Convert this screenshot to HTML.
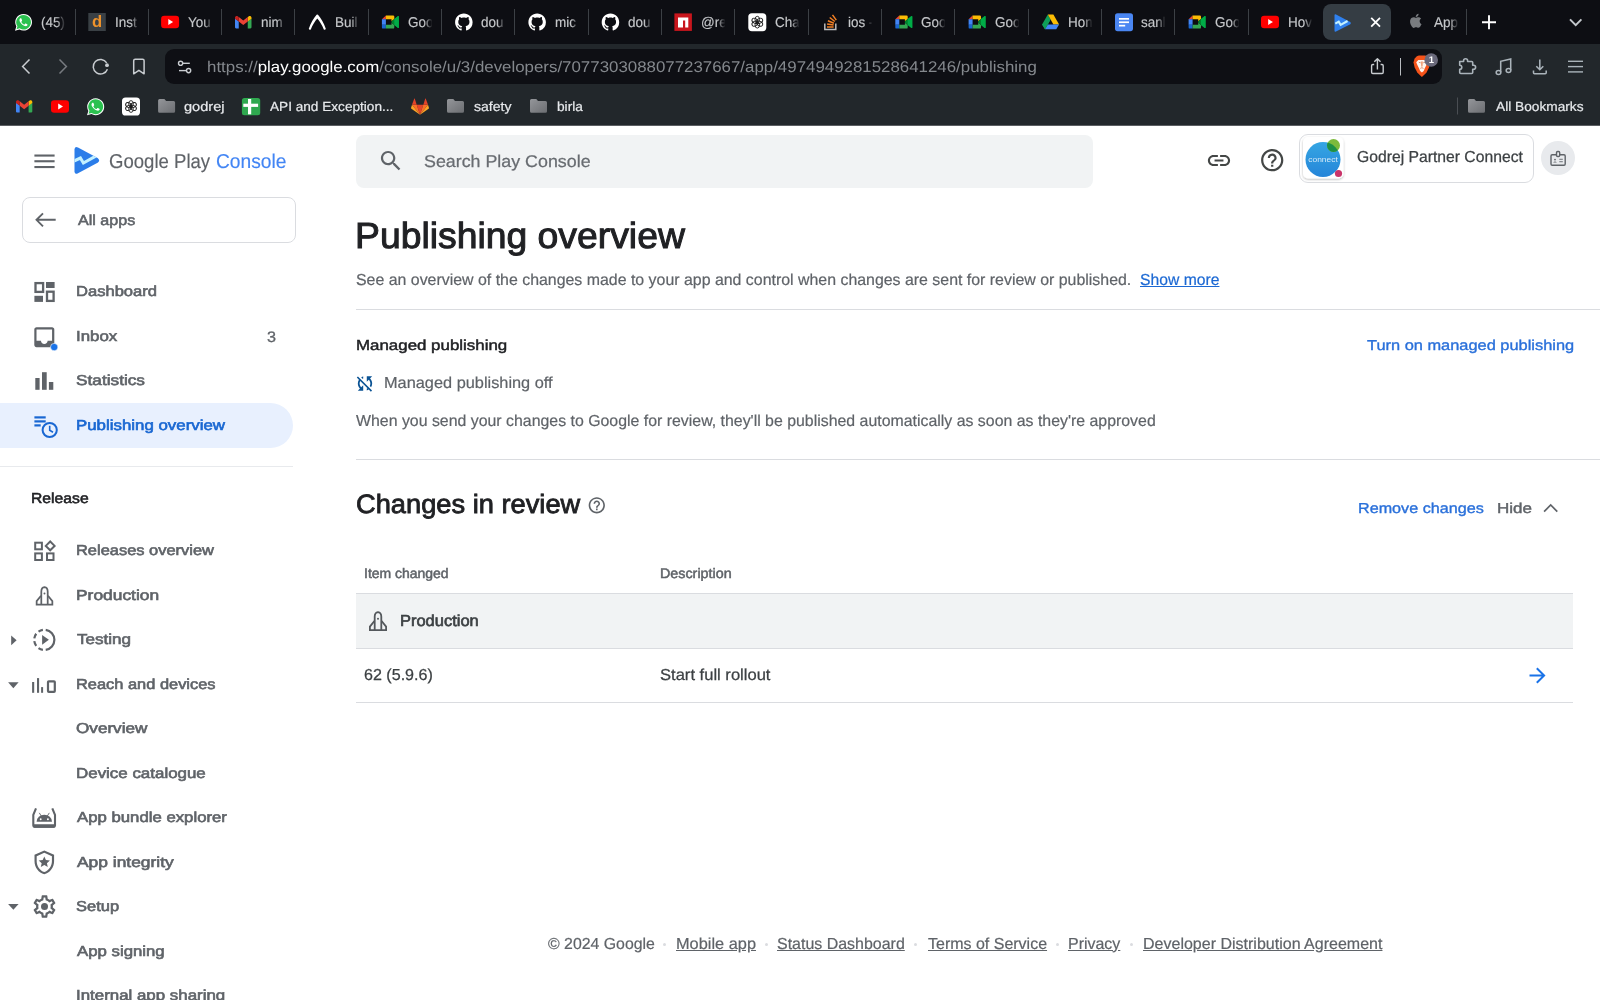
<!DOCTYPE html>
<html lang="en">
<head>
<meta charset="utf-8">
<title>Publishing overview - Google Play Console</title>
<style>
html,body{margin:0;padding:0;}
body{width:1600px;height:1000px;overflow:hidden;background:#fff;position:relative;font-family:"Liberation Sans",sans-serif;}
#root{position:absolute;left:0;top:0;width:1600px;height:1000px;overflow:hidden;will-change:transform;}
.a{position:absolute;}
.t{position:absolute;white-space:nowrap;text-rendering:geometricPrecision;transform-origin:0 50%;font-family:"Liberation Sans",sans-serif;}
svg{position:absolute;overflow:visible;}
#tabbar{left:0;top:0;width:1600px;height:44px;background:#0d0e13;}
#toolbar{left:0;top:44px;width:1600px;height:81px;background:#22272b;}
#chromeline{left:0;top:125px;width:1600px;height:1px;background:#5b5e62;}
#urlbar{left:165px;top:49px;width:1277px;height:35px;border-radius:9px;background:#0e0f14;}
.sep{position:absolute;z-index:6;top:9px;width:1px;height:26px;background:#3c4045;}
#acttab{left:1323.3px;top:4px;width:67.7px;height:36px;border-radius:8px;background:#353d44;}
.fade{position:absolute;z-index:5;top:10px;width:17px;height:26px;background:linear-gradient(90deg,rgba(13,14,19,0),#0d0e13 50%);}
#navsel{left:0;top:403px;width:293px;height:45px;border-radius:0 23px 23px 0;background:#e8f0fe;}
#navdiv{left:0;top:466px;width:293px;height:1px;background:#e8eaed;}
#allapps{left:22px;top:197px;width:272px;height:44px;border:1px solid #dadce0;border-radius:8px;box-sizing:content-box;}
#search{left:355.6px;top:134.5px;width:737.4px;height:53.5px;border-radius:8px;background:#f1f3f4;}
#appchip{left:1299px;top:134px;width:233px;height:47px;border:1px solid #dadce0;border-radius:9px;}
#badgebtn{left:1541px;top:141px;width:34px;height:34px;border-radius:17px;background:#e8eaed;}
.hr{position:absolute;height:1px;background:#dadce0;}
#prodrow{left:355.5px;top:594px;width:1217.5px;height:54px;background:#f1f3f4;}
.dot{position:absolute;width:3px;height:3px;border-radius:2px;background:#dadce0;top:943px;}

</style>
</head>
<body>
<div id="root">
<div class="a" id="tabbar"></div>
<div class="a" id="toolbar"></div>
<div class="a" id="chromeline"></div>
<div class="a" id="urlbar"></div>
<div class="a" id="acttab"></div>
<div class="sep" style="left:74.5px"></div>
<div class="sep" style="left:147.83px"></div>
<div class="sep" style="left:221.16px"></div>
<div class="sep" style="left:294.49px"></div>
<div class="sep" style="left:367.82px"></div>
<div class="sep" style="left:441.15px"></div>
<div class="sep" style="left:514.48px"></div>
<div class="sep" style="left:587.81px"></div>
<div class="sep" style="left:661.14px"></div>
<div class="sep" style="left:734.47px"></div>
<div class="sep" style="left:807.8px"></div>
<div class="sep" style="left:881.13px"></div>
<div class="sep" style="left:954.46px"></div>
<div class="sep" style="left:1027.79px"></div>
<div class="sep" style="left:1101.12px"></div>
<div class="sep" style="left:1174.45px"></div>
<div class="sep" style="left:1247.78px"></div>
<div class="sep" style="left:1466px"></div>
<div class="fade" style="left:57.4px"></div>
<div class="fade" style="left:130.73px"></div>
<div class="fade" style="left:204.06px"></div>
<div class="fade" style="left:277.39px"></div>
<div class="fade" style="left:350.72px"></div>
<div class="fade" style="left:424.05px"></div>
<div class="fade" style="left:497.38px"></div>
<div class="fade" style="left:570.71px"></div>
<div class="fade" style="left:644.04px"></div>
<div class="fade" style="left:717.37px"></div>
<div class="fade" style="left:790.7px"></div>
<div class="fade" style="left:864.03px"></div>
<div class="fade" style="left:937.36px"></div>
<div class="fade" style="left:1010.69px"></div>
<div class="fade" style="left:1084.02px"></div>
<div class="fade" style="left:1157.35px"></div>
<div class="fade" style="left:1230.68px"></div>
<div class="fade" style="left:1304.01px"></div>
<div class="fade" style="left:1449.67px"></div>
<svg id="chromeicons" width="1600" height="126" viewBox="0 0 1600 126" style="left:0;top:0">
<defs><linearGradient id="fg" x1="0" y1="0" x2="1" y2="1"><stop offset="0" stop-color="#94969a"/><stop offset="1" stop-color="#6c6e72"/></linearGradient></defs>
<g transform="translate(14.7 13.6) scale(1.0176470588235293)"><path d="M8.700 0.300 A8.200 8.200 0 0 0 1.600 12.600 L0.300 16.800 L4.700 15.600 A8.200 8.200 0 1 0 8.700 0.300 Z" fill="#fff"/><path d="M8.700 1.300 A7.200 7.200 0 0 0 2.700 12.500 L1.800 15.300 L4.800 14.500 A7.200 7.200 0 1 0 8.700 1.300 Z" fill="#2bc14f"/><path d="M6.300 4.600 C5.900 4.400 5.500 4.500 5.200 4.900 C4.300 6 4.600 7.400 5.600 8.800 C6.800 10.500 8.300 11.700 10 12.200 C11 12.500 12 12.200 12.500 11.400 C12.700 11 12.600 10.700 12.300 10.500 L10.900 9.800 C10.600 9.700 10.400 9.700 10.200 10 L9.700 10.600 C9.500 10.800 9.300 10.800 9 10.700 C7.900 10.200 7.100 9.400 6.600 8.400 C6.500 8.200 6.500 8 6.700 7.800 L7.100 7.300 C7.300 7.100 7.300 6.900 7.200 6.600 L6.700 5.100 C6.600 4.800 6.500 4.700 6.300 4.600 Z" fill="#fff"/></g>
<rect x="88.3" y="13" width="17.5" height="18.0" fill="#3a4045"/><text x="97.05" y="27.00" font-family="Liberation Sans, sans-serif" font-weight="700" font-size="16.6" fill="#f0932b" text-anchor="middle">d</text>
<rect x="161.1" y="15.7" width="18" height="12.6" rx="3.200" fill="#f00"/><path d="M168.30 19.10 L168.30 24.90 L173.07 22.00 Z" fill="#fff"/>
<g transform="translate(235.0 16) scale(1.000 1.000)"><path d="M0 2.600 L0 11.300 Q0 12.400 1.100 12.400 L3.750 12.400 L3.750 5.400 Z" fill="#4285f4"/><path d="M16.500 2.600 L16.500 11.300 Q16.500 12.400 15.400 12.400 L12.750 12.400 L12.750 5.400 Z" fill="#34a853"/><path d="M12.750 1 L12.750 5.600 L16.500 2.800 L16.500 1.800 C16.500 0.200 14.700 -0.500 13.600 0.400 Z" fill="#fbbc04"/><path d="M3.750 5.600 L3.750 1 L8.250 4.400 L12.750 1 L12.750 5.600 L8.250 9 Z" fill="#ea4335"/><path d="M0 1.800 L0 2.800 L3.750 5.600 L3.750 1 L2.900 0.400 C1.800 -0.500 0 0.200 0 1.800 Z" fill="#c5221f"/></g>
<g transform="translate(308.3 13.5) scale(1.0)"><path d="M0.500 15.200 C2.500 9.500 5.500 4.500 8.300 1.300 Q9 0.500 9.700 1.300 C12.500 4.500 15.500 9.500 17.500 15.200 Q17.200 16.600 15.500 16 C13.800 11.500 11.500 7.600 9 4.900 C6.500 7.600 4.200 11.500 2.500 16 Q0.800 16.600 0.500 15.200 Z" fill="#fff"/></g>
<g transform="translate(381.9 14) scale(1.0)"><path d="M0 5.200 L4 1.400 L4 5.200 Z" fill="#ea4335"/><path d="M4 1.400 H11.200 Q12.400 1.400 12.400 2.600 V5 L9.600 7.300 V5.200 H4 Z" fill="#fbbc04"/><path d="M0 5.200 H4 V10.800 H0 Z" fill="#4285f4"/><path d="M0 10.800 H4 V14.600 H1.200 Q0 14.600 0 13.400 Z" fill="#1967d2"/><path d="M4 10.800 H9.600 V8.700 L12.400 11 V13.400 Q12.400 14.600 11.200 14.600 H4 Z" fill="#34a853"/><path d="M9.600 7.300 L12.400 5 L15.800 2.200 Q17 1.500 17 2.800 V13.200 Q17 14.500 15.800 13.800 L12.400 11 L9.600 8.700 Z" fill="#00832d"/><path d="M12.400 5 L15.800 2.200 Q17 1.500 17 2.800 V13.200 Q17 14.500 15.800 13.800 L12.400 11 Z" fill="#00ac47"/></g>
<g transform="translate(455.1 13.4) scale(1.0938)"><path d="M8 0C3.58 0 0 3.58 0 8c0 3.54 2.290 6.530 5.470 7.590.4.070.550-.170.550-.380 0-.190-.010-.820-.010-1.490-2.010.370-2.530-.490-2.690-.940-.090-.230-.480-.940-.820-1.130-.280-.150-.680-.520-.010-.530.630-.010 1.080.580 1.230.820.720 1.210 1.870.870 2.330.660.070-.520.280-.870.510-1.070-1.780-.2-3.640-.890-3.640-3.950 0-.870.310-1.590.820-2.150-.080-.2-.360-1.020.080-2.120 0 0 .670-.210 2.200.820.640-.180 1.320-.270 2-.270.680 0 1.360.090 2 .270 1.530-1.040 2.200-.820 2.200-.820.440 1.100.160 1.920.080 2.120.510.560.820 1.270.820 2.150 0 3.070-1.870 3.750-3.650 3.950.290.250.540.730.540 1.480 0 1.070-.010 1.930-.010 2.200 0 .210.150.460.550.380A8.013 8.013 0 0016 8c0-4.420-3.580-8-8-8z" fill="#fff"/></g>
<g transform="translate(528.4 13.4) scale(1.0938)"><path d="M8 0C3.58 0 0 3.58 0 8c0 3.54 2.290 6.530 5.470 7.590.4.070.550-.170.550-.380 0-.190-.010-.820-.010-1.490-2.010.370-2.530-.490-2.690-.940-.090-.230-.480-.940-.820-1.130-.280-.150-.680-.520-.010-.530.630-.010 1.080.580 1.230.820.720 1.210 1.870.870 2.330.660.070-.520.280-.870.510-1.070-1.780-.2-3.640-.890-3.640-3.950 0-.870.310-1.590.820-2.150-.080-.2-.360-1.020.080-2.120 0 0 .670-.210 2.200.820.640-.180 1.320-.270 2-.270.680 0 1.360.090 2 .270 1.530-1.040 2.200-.820 2.200-.820.440 1.100.160 1.920.080 2.120.510.560.820 1.270.820 2.150 0 3.070-1.870 3.750-3.650 3.950.290.250.540.730.540 1.480 0 1.070-.010 1.930-.010 2.200 0 .210.150.460.550.380A8.013 8.013 0 0016 8c0-4.420-3.580-8-8-8z" fill="#fff"/></g>
<g transform="translate(601.7 13.4) scale(1.0938)"><path d="M8 0C3.58 0 0 3.58 0 8c0 3.54 2.290 6.530 5.470 7.590.4.070.550-.170.550-.380 0-.190-.010-.820-.010-1.490-2.010.370-2.530-.490-2.690-.940-.090-.230-.480-.940-.820-1.130-.280-.150-.680-.520-.010-.530.630-.010 1.080.580 1.230.820.720 1.210 1.870.870 2.330.660.070-.520.280-.870.510-1.070-1.780-.2-3.640-.890-3.640-3.950 0-.870.310-1.590.820-2.150-.080-.2-.360-1.020.080-2.120 0 0 .670-.210 2.200.820.640-.180 1.320-.270 2-.270.680 0 1.360.090 2 .270 1.530-1.040 2.200-.820 2.200-.820.440 1.100.160 1.920.080 2.120.510.560.820 1.270.820 2.150 0 3.070-1.870 3.750-3.650 3.950.290.250.540.730.540 1.480 0 1.070-.010 1.930-.010 2.200 0 .210.150.460.550.380A8.013 8.013 0 0016 8c0-4.420-3.580-8-8-8z" fill="#fff"/></g>
<rect x="674.4" y="13.4" width="17.5" height="17.5" fill="#c8161d"/><path d="M678.0 17.4 H688.3 V27.5 H685.1999999999999 V20.5 H683.0 V27.5 H678.0 Z" fill="#fff"/>
<rect x="748.3" y="13.2" width="18" height="18" rx="3.600" fill="#fff"/><g fill="none" stroke="#1a1a1a" stroke-width="0.900"><ellipse cx="757.3" cy="19.50" rx="2.300" ry="3.200" transform="rotate(0 757.3 22.2)"/><ellipse cx="757.3" cy="19.50" rx="2.300" ry="3.200" transform="rotate(60 757.3 22.2)"/><ellipse cx="757.3" cy="19.50" rx="2.300" ry="3.200" transform="rotate(120 757.3 22.2)"/><ellipse cx="757.3" cy="19.50" rx="2.300" ry="3.200" transform="rotate(180 757.3 22.2)"/><ellipse cx="757.3" cy="19.50" rx="2.300" ry="3.200" transform="rotate(240 757.3 22.2)"/><ellipse cx="757.3" cy="19.50" rx="2.300" ry="3.200" transform="rotate(300 757.3 22.2)"/></g>
<path d="M824.8 23.5 V29.5 H835.8 V23.5" fill="none" stroke="#bcbbbb" stroke-width="1.500"/><g stroke="#f48024" stroke-width="1.500"><path d="M827.0 27.0 H833.5999999999999"/><path d="M827.0999999999999 23.9 L833.5999999999999 25.1"/><path d="M827.9 20.7 L833.9 23.3"/><path d="M829.6999999999999 17.5 L834.8 21.5"/><path d="M832.5 14.9 L836.3 20.1"/></g>
<g transform="translate(895.3 14) scale(1.0)"><path d="M0 5.200 L4 1.400 L4 5.200 Z" fill="#ea4335"/><path d="M4 1.400 H11.200 Q12.400 1.400 12.400 2.600 V5 L9.600 7.300 V5.200 H4 Z" fill="#fbbc04"/><path d="M0 5.200 H4 V10.800 H0 Z" fill="#4285f4"/><path d="M0 10.800 H4 V14.600 H1.200 Q0 14.600 0 13.400 Z" fill="#1967d2"/><path d="M4 10.800 H9.600 V8.700 L12.400 11 V13.400 Q12.400 14.600 11.200 14.600 H4 Z" fill="#34a853"/><path d="M9.600 7.300 L12.400 5 L15.800 2.200 Q17 1.500 17 2.800 V13.200 Q17 14.500 15.800 13.800 L12.400 11 L9.600 8.700 Z" fill="#00832d"/><path d="M12.400 5 L15.800 2.200 Q17 1.500 17 2.800 V13.200 Q17 14.500 15.800 13.800 L12.400 11 Z" fill="#00ac47"/></g>
<g transform="translate(968.6 14) scale(1.0)"><path d="M0 5.200 L4 1.400 L4 5.200 Z" fill="#ea4335"/><path d="M4 1.400 H11.200 Q12.400 1.400 12.400 2.600 V5 L9.600 7.300 V5.200 H4 Z" fill="#fbbc04"/><path d="M0 5.200 H4 V10.800 H0 Z" fill="#4285f4"/><path d="M0 10.800 H4 V14.600 H1.200 Q0 14.600 0 13.400 Z" fill="#1967d2"/><path d="M4 10.800 H9.600 V8.700 L12.400 11 V13.400 Q12.400 14.600 11.200 14.600 H4 Z" fill="#34a853"/><path d="M9.600 7.300 L12.400 5 L15.800 2.200 Q17 1.500 17 2.800 V13.200 Q17 14.500 15.800 13.800 L12.400 11 L9.600 8.700 Z" fill="#00832d"/><path d="M12.400 5 L15.800 2.200 Q17 1.500 17 2.800 V13.200 Q17 14.500 15.800 13.800 L12.400 11 Z" fill="#00ac47"/></g>
<g transform="translate(1042.1 14.5) scale(1.000 1.000)"><path d="M5.700 0 L0 9.900 L2.850 14.850 L8.500 4.950 Z" fill="#0f9d58"/><path d="M5.700 0 H11.300 L17 9.900 H11.300 Z" fill="#fbbc04"/><path d="M2.850 14.850 L5.700 9.900 H17 L14.150 14.850 Z" fill="#4285f4"/><path d="M11.300 9.900 H17 L14.150 14.850 Z" fill="#ea4335" opacity="0.000"/><path d="M8.500 4.950 L5.700 9.900 L2.850 14.850 L0 9.900 Z" fill="#0f9d58"/></g>
<rect x="1115.0" y="13.2" width="18" height="18" rx="2.600" fill="#4a86f2"/><g fill="#fff"><rect x="1119.0" y="18.0" width="10" height="1.700"/><rect x="1119.0" y="21.4" width="10" height="1.700"/><rect x="1119.0" y="24.799999999999997" width="6.20" height="1.700"/></g>
<g transform="translate(1188.6 14) scale(1.0)"><path d="M0 5.200 L4 1.400 L4 5.200 Z" fill="#ea4335"/><path d="M4 1.400 H11.200 Q12.400 1.400 12.400 2.600 V5 L9.600 7.300 V5.200 H4 Z" fill="#fbbc04"/><path d="M0 5.200 H4 V10.800 H0 Z" fill="#4285f4"/><path d="M0 10.800 H4 V14.600 H1.200 Q0 14.600 0 13.400 Z" fill="#1967d2"/><path d="M4 10.800 H9.600 V8.700 L12.400 11 V13.400 Q12.400 14.600 11.200 14.600 H4 Z" fill="#34a853"/><path d="M9.600 7.300 L12.400 5 L15.800 2.200 Q17 1.500 17 2.800 V13.200 Q17 14.500 15.800 13.800 L12.400 11 L9.600 8.700 Z" fill="#00832d"/><path d="M12.400 5 L15.800 2.200 Q17 1.500 17 2.800 V13.200 Q17 14.500 15.800 13.800 L12.400 11 Z" fill="#00ac47"/></g>
<rect x="1261.0" y="15.7" width="18" height="12.6" rx="3.200" fill="#f00"/><path d="M1268.20 19.10 L1268.20 24.90 L1272.97 22.00 Z" fill="#fff"/>
<g transform="translate(1334.5 14) scale(0.6693)"><path d="M2.300 0.600 Q0 -0.200 0 2.200 L0 24.800 Q0 27.200 2.300 26.300 L23.600 15.200 Q25.400 13.500 23.600 11.800 Z" fill="#2f80ed"/><path d="M1.200 14.400 L6.300 11.400 L9.200 16.200 L19.500 10.500" fill="none" stroke="#c4f1ff" stroke-width="3.200"/></g>
<g transform="translate(1407.3 12.3) scale(0.7083)"><path d="M18.710 19.500c-.830 1.240-1.710 2.450-3.050 2.470-1.340.030-1.770-.790-3.290-.790-1.530 0-2 .770-3.270.820-1.310.050-2.300-1.320-3.140-2.530C4.250 17 2.940 12.450 4.700 9.390c.870-1.520 2.430-2.480 4.120-2.510 1.280-.020 2.500.870 3.290.870.780 0 2.260-1.070 3.810-.910.650.030 2.470.260 3.640 1.980-.090.060-2.170 1.280-2.150 3.810.030 3.020 2.650 4.030 2.680 4.040-.030.070-.420 1.440-1.380 2.830M13 3.500c.730-.830 1.940-1.460 2.940-1.500.130 1.170-.340 2.350-1.040 3.190-.690.850-1.830 1.510-2.950 1.420-.150-1.150.410-2.350 1.050-3.110z" fill="#797c80"/></g>
<path d="M1371.200 17.800 L1380 26.600 M1380 17.800 L1371.200 26.600" stroke="#fff" stroke-width="1.800" fill="none"/>
<path d="M1482 22.300 H1496 M1489 15.300 V29.300" stroke="#fff" stroke-width="1.900" fill="none"/>
<path d="M1570 19.400 L1575.700 25.100 L1581.400 19.400" stroke="#c3c7cc" stroke-width="2" fill="none"/>
<path d="M29.500 59.500 L22.600 66.500 L29.500 73.500" stroke="#c9cdd1" stroke-width="1.500" fill="none" stroke-linejoin="miter"/>
<path d="M59.500 59.500 L66.400 66.500 L59.500 73.500" stroke="#777b80" stroke-width="1.500" fill="none"/>
<path d="M106.700 62.800 A7.300 7.300 0 1 0 107.400 69.200" stroke="#c9cdd1" stroke-width="1.500" fill="none"/><circle cx="107" cy="65.200" r="1.900" fill="#c9cdd1"/>
<path d="M133.700 73.800 V60.800 Q133.700 59.300 135.200 59.300 H142.600 Q144.100 59.300 144.100 60.800 V73.800 L138.900 70.300 Z" stroke="#c9cdd1" stroke-width="1.500" fill="none" stroke-linejoin="round"/>
<g stroke="#c9cdd1" stroke-width="1.400" fill="none"><circle cx="180.600" cy="63.300" r="2.100"/><path d="M182.700 63.300 H189.800"/><circle cx="188.600" cy="70.600" r="2.100"/><path d="M179 70.600 H186.500"/></g>
<g stroke="#c9cdd1" stroke-width="1.400" fill="none" stroke-linejoin="round"><path d="M1374.200 64.500 H1372.800 Q1371.600 64.500 1371.600 65.700 V72.300 Q1371.600 73.500 1372.800 73.500 H1382 Q1383.200 73.500 1383.200 72.300 V65.700 Q1383.200 64.500 1382 64.500 H1380.600"/><path d="M1377.400 69.500 V59.200 M1374.300 61.800 L1377.400 58.700 L1380.500 61.800"/></g>
<rect x="1400" y="58" width="1" height="17.500" fill="#b9bdc1"/>
<path d="M1416.800 56.200 L1418.800 55.500 H1425 L1427 56.200 L1429.300 58.700 L1430.200 62.500 L1429 67.600 L1426.400 72.700 L1421.900 77 L1417.400 72.700 L1414.700 67.600 L1413.500 62.500 L1414.500 58.700 Z" fill="#f5531a"/><path d="M1416.200 62.200 L1418.300 60.100 H1425.400 L1427.400 62.200 L1426.200 65.600 L1424.800 68.300 L1423.700 71 L1421.900 72.400 L1420.100 71 L1419 68.300 L1417.600 65.600 Z" fill="#fff7f0"/><path d="M1420.800 61.600 H1422.900 L1422.600 66.300 L1421.900 66.900 L1421.200 66.300 Z" fill="#f0a27c"/><path d="M1418.800 62.300 L1420.600 62.800 M1425 62.300 L1423.200 62.800" stroke="#b5542c" stroke-width="0.600"/><path d="M1420.300 68.400 L1421.900 67.700 L1423.500 68.400" stroke="#d0683f" stroke-width="0.700" fill="none"/>
<circle cx="1431.200" cy="60" r="6.800" fill="#6a697b"/>
<path d="M1459.700 61.500 H1463.600 V60.700 A2 2 0 0 1 1467.600 60.700 V61.500 H1471.700 Q1472.700 61.500 1472.700 62.500 V65.300 H1473.600 A2 2 0 0 1 1473.600 69.300 H1472.700 V72.500 Q1472.700 73.500 1471.700 73.500 H1460.700 Q1459.700 73.500 1459.700 72.500 V69.400 A2.100 2.100 0 0 0 1459.700 65.200 Z" stroke="#aab3ba" stroke-width="1.600" fill="none" stroke-linejoin="round"/>
<g stroke="#aab3ba" stroke-width="1.550" fill="none"><path d="M1500.700 72.300 V61.300 L1510.700 59 V70.300"/><ellipse cx="1498.500" cy="72.400" rx="2.300" ry="2"/><ellipse cx="1508.500" cy="70.500" rx="2.300" ry="2"/></g>
<g stroke="#aab3ba" stroke-width="1.550" fill="none"><path d="M1539.800 59.500 V69.500 M1536.300 66.200 L1539.800 69.700 L1543.300 66.200"/><path d="M1533.500 70.500 V72.800 Q1533.500 73.800 1534.500 73.800 H1545.200 Q1546.200 73.800 1546.200 72.800 V70.500"/></g>
<g fill="#aab3ba"><rect x="1568" y="60.600" width="15" height="1.400"/><rect x="1568" y="65.900" width="15" height="1.400"/><rect x="1568" y="71.200" width="15" height="1.400"/></g>
<g transform="translate(16 100.3) scale(0.988 0.984)"><path d="M0 2.600 L0 11.300 Q0 12.400 1.100 12.400 L3.750 12.400 L3.750 5.400 Z" fill="#4285f4"/><path d="M16.500 2.600 L16.500 11.300 Q16.500 12.400 15.400 12.400 L12.750 12.400 L12.750 5.400 Z" fill="#34a853"/><path d="M12.750 1 L12.750 5.600 L16.500 2.800 L16.500 1.800 C16.500 0.200 14.700 -0.500 13.600 0.400 Z" fill="#fbbc04"/><path d="M3.750 5.600 L3.750 1 L8.250 4.400 L12.750 1 L12.750 5.600 L8.250 9 Z" fill="#ea4335"/><path d="M0 1.800 L0 2.800 L3.750 5.600 L3.750 1 L2.900 0.400 C1.800 -0.500 0 0.200 0 1.800 Z" fill="#c5221f"/></g>
<rect x="51" y="100.2" width="18" height="12.6" rx="3.200" fill="#f00"/><path d="M58.20 103.60 L58.20 109.40 L62.97 106.50 Z" fill="#fff"/>
<g transform="translate(86.7 98) scale(1.0294117647058822)"><path d="M8.700 0.300 A8.200 8.200 0 0 0 1.600 12.600 L0.300 16.800 L4.700 15.600 A8.200 8.200 0 1 0 8.700 0.300 Z" fill="#fff"/><path d="M8.700 1.300 A7.200 7.200 0 0 0 2.700 12.500 L1.800 15.300 L4.800 14.500 A7.200 7.200 0 1 0 8.700 1.300 Z" fill="#2bc14f"/><path d="M6.300 4.600 C5.900 4.400 5.500 4.500 5.200 4.900 C4.300 6 4.600 7.400 5.600 8.800 C6.800 10.500 8.300 11.700 10 12.200 C11 12.500 12 12.200 12.500 11.400 C12.700 11 12.600 10.700 12.300 10.500 L10.900 9.800 C10.600 9.700 10.400 9.700 10.200 10 L9.700 10.600 C9.500 10.800 9.300 10.800 9 10.700 C7.900 10.200 7.100 9.400 6.600 8.400 C6.500 8.200 6.500 8 6.700 7.800 L7.100 7.300 C7.300 7.100 7.300 6.900 7.200 6.600 L6.700 5.100 C6.600 4.800 6.500 4.700 6.300 4.600 Z" fill="#fff"/></g>
<rect x="122" y="97.5" width="18" height="18" rx="3.600" fill="#fff"/><g fill="none" stroke="#1a1a1a" stroke-width="0.900"><ellipse cx="131.0" cy="103.80" rx="2.300" ry="3.200" transform="rotate(0 131.0 106.5)"/><ellipse cx="131.0" cy="103.80" rx="2.300" ry="3.200" transform="rotate(60 131.0 106.5)"/><ellipse cx="131.0" cy="103.80" rx="2.300" ry="3.200" transform="rotate(120 131.0 106.5)"/><ellipse cx="131.0" cy="103.80" rx="2.300" ry="3.200" transform="rotate(180 131.0 106.5)"/><ellipse cx="131.0" cy="103.80" rx="2.300" ry="3.200" transform="rotate(240 131.0 106.5)"/><ellipse cx="131.0" cy="103.80" rx="2.300" ry="3.200" transform="rotate(300 131.0 106.5)"/></g>
<path d="M159.6 99 H164.4 L166.1 100.9 H173.6 Q175.1 100.9 175.1 102.4 V111.2 Q175.1 112.7 173.6 112.7 H159.6 Q158.1 112.7 158.1 111.2 V100.5 Q158.1 99 159.6 99 Z" fill="url(#fg)"/>
<rect x="241.9" y="98.1" width="18.3" height="17.2" rx="2.500" fill="#2fa84f"/><rect x="248.0" y="99.0" width="3.200" height="15.3" fill="#fff"/><rect x="243.3" y="103.7" width="14.8" height="3.200" fill="#fff"/>
<g transform="translate(411 98.3) scale(1.000 1.000)"><path d="M9 16.500 L12.300 6.400 H5.700 Z" fill="#e24329"/><path d="M9 16.500 L5.700 6.400 H1 Z" fill="#fc6d26"/><path d="M1 6.400 L0.050 9.400 Q-0.100 10 0.400 10.400 L9 16.500 Z" fill="#fca326"/><path d="M1 6.400 H5.700 L3.700 0.300 Q3.500 -0.100 3.300 0.300 Z" fill="#e24329"/><path d="M9 16.500 L12.300 6.400 H17 Z" fill="#fc6d26"/><path d="M17 6.400 L17.950 9.400 Q18.100 10 17.600 10.400 L9 16.500 Z" fill="#fca326"/><path d="M17 6.400 H12.300 L14.300 0.300 Q14.500 -0.100 14.700 0.300 Z" fill="#e24329"/></g>
<path d="M448.5 99 H453.3 L455 100.9 H462.5 Q464 100.9 464 102.4 V111.2 Q464 112.7 462.5 112.7 H448.5 Q447 112.7 447 111.2 V100.5 Q447 99 448.5 99 Z" fill="url(#fg)"/>
<path d="M531.5 99 H536.3 L538 100.9 H545.5 Q547 100.9 547 102.4 V111.2 Q547 112.7 545.5 112.7 H531.5 Q530 112.7 530 111.2 V100.5 Q530 99 531.5 99 Z" fill="url(#fg)"/>
<rect x="1457" y="97.500" width="1" height="17" fill="#4a4e53"/>
<path d="M1469.5 99 H1474.3 L1476 100.9 H1483.5 Q1485 100.9 1485 102.4 V111.2 Q1485 112.7 1483.5 112.7 H1469.5 Q1468 112.7 1468 111.2 V100.5 Q1468 99 1469.5 99 Z" fill="url(#fg)"/>
</svg>
<div class="a" id="navsel"></div>
<div class="a" id="navdiv"></div>
<div class="a" id="allapps"></div>
<div class="a" id="search"></div>
<div class="a" id="appchip"></div>
<div class="a" id="badgebtn"></div>
<div class="hr" style="left:356px;top:309px;width:1244px"></div>
<div class="hr" style="left:356px;top:459px;width:1244px"></div>
<div class="hr" style="left:355.5px;top:593px;width:1217.5px"></div>
<div class="a" id="prodrow"></div>
<div class="hr" style="left:355.5px;top:648px;width:1217.5px"></div>
<div class="hr" style="left:355.5px;top:702px;width:1217.5px"></div>
<svg id="pageicons" width="1600" height="1000" viewBox="0 0 1600 1000" style="left:0;top:0">
<rect x="34.4" y="154.5" width="20.2" height="2.1" fill="#5f6368"/>
<rect x="34.4" y="160.2" width="20.2" height="2.1" fill="#5f6368"/>
<rect x="34.4" y="166" width="20.2" height="2.1" fill="#5f6368"/>
<defs><clipPath id="lc"><path d="M78 147.500 Q74.500 145.800 74.500 149.600 L74.500 171.200 Q74.500 175 78 173.300 L97.600 162.700 Q100.600 160.400 97.600 158.100 Z"/></clipPath></defs><g id="logo" clip-path="url(#lc)"><rect x="70" y="140" width="36" height="40" fill="#2b7de9"/><path d="M72 162 L80.400 158 L83.400 163 L98 154.900" fill="none" stroke="#c4f1ff" stroke-width="3.100" stroke-linejoin="miter"/></g>
<path d="M55.700 219.800 H37 M43 213.300 L36.500 219.800 L43 226.300" fill="none" stroke="#5f6368" stroke-width="1.900"/>
<g fill="none" stroke="#5f6368" stroke-width="2.300"><rect x="35.500" y="283.100" width="7.600" height="8.800"/><rect x="47" y="291.700" width="6.600" height="9.200"/></g><rect x="46" y="282" width="8.600" height="6" fill="#5f6368"/><rect x="34.400" y="295.800" width="8.600" height="6.100" fill="#5f6368"/>
<g transform="translate(30.965 323.965) scale(1.1113)" fill="#5f6368" ><path d="M19 3H4.99c-1.11 0-1.98.9-1.98 2L3 19c0 1.1.88 2 1.99 2H19c1.1 0 2-.9 2-2V5c0-1.1-.9-2-2-2zm0 12h-4c0 1.66-1.35 3-3 3s-3-1.34-3-3H4.990V5H19v10z"/></g>
<circle cx="54.200" cy="347.100" r="3.700" fill="#1a73e8" stroke="#fff" stroke-width="0.600"/>
<g fill="#5f6368"><rect x="35.300" y="378" width="4.300" height="11.800"/><rect x="42" y="372.200" width="4.700" height="17.600"/><rect x="48.900" y="382" width="4.400" height="7.800"/></g>
<g fill="#1967d2"><rect x="34.400" y="416.300" width="11.300" height="2.200"/><rect x="34.400" y="420.300" width="11.300" height="2.200"/><rect x="34.400" y="424.300" width="6.300" height="2.200"/></g><circle cx="49.700" cy="430" r="7.100" fill="#e8f0fe" stroke="#1967d2" stroke-width="2"/><path d="M49.700 425.800 V430.300 L53 432.200" fill="none" stroke="#1967d2" stroke-width="1.600"/>
<g fill="none" stroke="#5f6368" stroke-width="2"><rect x="35.200" y="542.700" width="6.700" height="6.600"/><rect x="35.200" y="553.400" width="6.700" height="6.600"/><rect x="47" y="553.400" width="6.500" height="6.600"/><path d="M50.200 541.500 L54.600 545.900 L50.200 550.300 L45.800 545.900 Z"/></g>
<g transform="translate(44.5 586.2) scale(0.97)" fill="none" stroke="#5f6368" stroke-width="1.800" stroke-linejoin="miter"><path d="M-3.300 18.900 V5.600 C-3.300 2.800 -1.700 1.100 0 0.900 C1.700 1.100 3.300 2.800 3.300 5.600 V18.900"/><path d="M-3.600 9.800 L-8.100 15.400 V18.900 H8.100 V15.400 L3.600 9.800"/><circle cx="0" cy="7.600" r="1" fill="#5f6368" stroke="none"/></g>
<path d="M45.71 629.80 A10.1 10.1 0 0 1 45.71 649.80 M42.89 649.80 A10.1 10.1 0 0 1 38.51 648.07 M36.23 645.88 A10.1 10.1 0 0 1 34.30 641.21 M34.30 638.39 A10.1 10.1 0 0 1 36.23 633.72 M38.51 631.53 A10.1 10.1 0 0 1 42.89 629.80" fill="none" stroke="#5f6368" stroke-width="2.200"/><path d="M42.100 634.900 L48.900 639.800 L42.100 644.700 Z" fill="#5f6368"/>
<path d="M11.200 635.400 L16.600 640.300 L11.200 645.300 Z" fill="#5f6368"/>
<path d="M8.100 682.300 H18.600 L13.350 688.200 Z" fill="#5f6368"/>
<g fill="#5f6368"><rect x="32.100" y="682" width="2.100" height="10.800"/><rect x="37" y="678.100" width="2.100" height="14.700"/><rect x="41.100" y="687.100" width="2" height="5.700"/></g><rect x="48" y="681.300" width="6.800" height="10.500" rx="0.800" fill="none" stroke="#5f6368" stroke-width="2.200"/>
<path d="M36 808.300 L33.300 814.900 V825.500 Q33.300 826.800 34.600 826.800 H53.700 Q55 826.800 55 825.500 V814.900 L52.300 808.300" fill="none" stroke="#5f6368" stroke-width="2.100" stroke-linejoin="round"/><rect x="33.300" y="824.300" width="21.700" height="3.400" rx="1" fill="#5f6368"/><path d="M36.600 821.700 A7.700 7 0 0 1 52 821.700 Z" fill="#5f6368"/><path d="M41.200 815.900 L39.500 813.200 M47.400 815.900 L49.100 813.200" stroke="#5f6368" stroke-width="0.900" stroke-linecap="round"/><circle cx="40.700" cy="819.300" r="0.950" fill="#fff"/><circle cx="47.900" cy="819.300" r="0.950" fill="#fff"/>
<g transform="translate(31.25 849.35) scale(1.0875)" fill="#5f6368" ><path d="M12 1L3 5v6c0 5.550 3.840 10.740 9 12 5.160-1.260 9-6.450 9-12V5l-9-4zm0 2.180l7 3.120V11c0 4.520-2.980 8.690-7 9.930-4.020-1.240-7-5.410-7-9.930V6.300l7-3.120z"/></g>
<path d="M44.30 856.40 L45.92 860.08 L49.91 860.48 L46.92 863.15 L47.77 867.07 L44.30 865.05 L40.83 867.07 L41.68 863.15 L38.69 860.48 L42.68 860.08 Z" fill="#5f6368"/>
<path d="M8.100 904.100 H18.600 L13.350 909.800 Z" fill="#5f6368"/>
<g transform="translate(31.05 893.05) scale(1.1208)" fill="#5f6368" ><path d="M19.43 12.98c.04-.32.07-.64.07-.98 0-.34-.03-.66-.07-.98l2.110-1.65c.19-.15.24-.42.12-.64l-2-3.46c-.09-.16-.26-.25-.44-.25-.06 0-.12.01-.17.03l-2.49 1c-.52-.4-1.08-.73-1.69-.98l-.38-2.65C14.460 2.180 14.250 2 14 2h-4c-.25 0-.46.18-.49.42l-.38 2.650c-.61.25-1.17.59-1.69.98l-2.490-1c-.06-.02-.12-.03-.18-.03-.17 0-.34.09-.43.25l-2 3.460c-.13.22-.07.49.12.64l2.110 1.650c-.04.32-.07.65-.07.98 0 .33.03.66.07.98l-2.110 1.650c-.19.15-.24.42-.12.64l2 3.460c.09.16.26.25.44.25.06 0 .12-.01.17-.03l2.490-1c.52.4 1.080.73 1.690.98l.38 2.650c.03.24.24.42.49.42h4c.25 0 .46-.18.49-.42l.38-2.650c.61-.25 1.170-.59 1.690-.98l2.490 1c.06.02.12.03.18.03.17 0 .34-.09.43-.25l2-3.460c.12-.22.07-.49-.12-.64l-2.110-1.650zm-1.980-1.710c.04.31.05.52.05.73 0 .21-.02.43-.05.73l-.14 1.130.89.7 1.080.84-.7 1.210-1.270-.51-1.040-.42-.9.68c-.43.32-.84.56-1.250.73l-1.060.43-.16 1.130-.2 1.350h-1.400l-.19-1.350-.16-1.130-1.060-.43c-.43-.18-.83-.41-1.230-.71l-.91-.7-1.060.43-1.270.51-.7-1.210 1.080-.84.89-.7-.14-1.130c-.03-.31-.05-.54-.05-.74s.02-.43.05-.73l.14-1.130-.89-.7-1.080-.84.7-1.210 1.270.51 1.040.42.9-.68c.43-.32.84-.56 1.250-.73l1.060-.43.16-1.130.2-1.350h1.390l.19 1.350.16 1.130 1.060.43c.43.18.83.41 1.230.71l.91.7 1.060-.43 1.270-.51.7 1.210-1.070.85-.89.7.14 1.130z"/></g>
<circle cx="44.500" cy="906.500" r="3.500" fill="#5f6368"/>
<g transform="translate(377.565 147.565) scale(1.1113)" fill="#5f6368" ><path d="M15.5 14h-.79l-.28-.27C15.41 12.59 16 11.11 16 9.5 16 5.91 13.09 3 9.5 3S3 5.91 3 9.5 5.91 16 9.5 16c1.61 0 3.09-.59 4.23-1.57l.27.28v.79l5 4.99L20.49 19l-4.99-5zm-6 0C7.01 14 5 11.99 5 9.5S7.01 5 9.5 5 14 7.01 14 9.5 11.99 14 9.5 14z"/></g>
<g transform="translate(1205.66 147.165) scale(1.1113)" fill="#444746" ><path d="M3.9 12c0-1.71 1.39-3.1 3.1-3.1h4V7H7c-2.76 0-5 2.24-5 5s2.24 5 5 5h4v-1.9H7c-1.71 0-3.1-1.39-3.1-3.1zM8 13h8v-2H8v2zm9-6h-4v1.9h4c1.71 0 3.1 1.39 3.1 3.1s-1.39 3.1-3.1 3.1h-4V17h4c2.76 0 5-2.24 5-5s-2.24-5-5-5z"/></g>
<g transform="translate(1258.87 146.865) scale(1.1113)" fill="#444746" ><path d="M11 18h2v-2h-2v2zm1-16C6.48 2 2 6.48 2 12s4.48 10 10 10 10-4.48 10-10S17.520 2 12 2zm0 18c-4.41 0-8-3.59-8-8s3.59-8 8-8 8 3.59 8 8-3.59 8-8 8zm0-14c-2.21 0-4 1.79-4 4h2c0-1.1.9-2 2-2s2 .9 2 2c0 2-3 1.75-3 5h2c0-2.25 3-2.5 3-5 0-2.21-1.79-4-4-4z"/></g>
<defs><linearGradient id="cg" x1="0" y1="0" x2="0" y2="1"><stop offset="0" stop-color="#35a6e3"/><stop offset="1" stop-color="#2585d9"/></linearGradient><clipPath id="cc"><circle cx="1323" cy="159.500" r="17.500"/></clipPath><filter id="sh" x="-20%" y="-20%" width="140%" height="150%"><feDropShadow dx="0" dy="1" stdDeviation="1" flood-color="#000" flood-opacity="0.280"/></filter></defs>
<rect x="1303" y="137" width="40.500" height="41.500" rx="5" fill="#fff" filter="url(#sh)"/>
<circle cx="1323" cy="159.500" r="17.500" fill="url(#cg)"/><circle cx="1333.500" cy="145.500" r="6.500" fill="#7dba3c"/><circle cx="1333.500" cy="145.500" r="6.500" fill="#1d9047" clip-path="url(#cc)"/><circle cx="1338.500" cy="173.500" r="3.600" fill="#c9346a"/>
<text x="1323" y="162.300" font-family="Liberation Sans, sans-serif" font-size="7.600" fill="#fff" text-anchor="middle" textLength="29.500" lengthAdjust="spacingAndGlyphs" opacity="0.800">connect</text>
<g fill="none" stroke="#5f6368" stroke-width="1.400"><rect x="1551" y="154.700" width="14.200" height="10.600" rx="1.200"/><rect x="1556.500" y="151.500" width="3.200" height="5" rx="1.200" fill="#e8eaed"/></g><g fill="#5f6368"><circle cx="1555" cy="159.600" r="0.900"/><path d="M1553.100 162.600 Q1555 160.600 1556.900 162.600 Z"/><rect x="1559.300" y="158.800" width="3.500" height="0.900"/><rect x="1559.300" y="161.300" width="3.500" height="0.900"/></g>
<g transform="translate(354.25 372.75) scale(0.8958)" fill="#0b5394" ><path d="M10 6.35V4.26c-.8.21-1.55.54-2.23.96l1.460 1.460c.25-.12.5-.24.77-.33zm-7.140-.94l2.360 2.360C4.450 8.990 4 10.440 4 12c0 2.210.910 4.200 2.360 5.640L4 20h6v-6l-2.240 2.240C6.680 15.150 6 13.660 6 12c0-1 .250-1.940.680-2.770l8.080 8.080c-.25.13-.5.25-.77.34v2.090c.8-.21 1.550-.54 2.230-.96l2.360 2.360 1.270-1.270L4.140 4.140 2.860 5.410zM20 4h-6v6l2.240-2.240C17.320 8.850 18 10.340 18 12c0 1-.250 1.940-.680 2.770l1.460 1.460C19.550 15.010 20 13.560 20 12c0-2.210-.910-4.200-2.360-5.640L20 4z"/></g>
<g transform="translate(587.05 495.55) scale(0.8125)" fill="#5f6368" ><path d="M11 18h2v-2h-2v2zm1-16C6.48 2 2 6.48 2 12s4.48 10 10 10 10-4.48 10-10S17.520 2 12 2zm0 18c-4.41 0-8-3.59-8-8s3.59-8 8-8 8 3.59 8 8-3.59 8-8 8zm0-14c-2.21 0-4 1.79-4 4h2c0-1.1.9-2 2-2s2 .9 2 2c0 2-3 1.75-3 5h2c0-2.25 3-2.5 3-5 0-2.21-1.79-4-4-4z"/></g>
<path d="M1544.100 511.600 L1550.700 505 L1557.300 511.600" fill="none" stroke="#5f6368" stroke-width="1.700"/>
<g transform="translate(378 611.2) scale(1.0)" fill="none" stroke="#54585c" stroke-width="1.800" stroke-linejoin="miter"><path d="M-3.300 18.900 V5.600 C-3.300 2.800 -1.700 1.100 0 0.900 C1.700 1.100 3.300 2.800 3.300 5.600 V18.900"/><path d="M-3.600 9.800 L-8.100 15.400 V18.900 H8.100 V15.400 L3.600 9.800"/><circle cx="0" cy="7.600" r="1" fill="#54585c" stroke="none"/></g>
<g transform="translate(1525.5 663.5) scale(1.0000)" fill="#1a73e8" ><path d="M12 4l-1.41 1.41L16.17 11H4v2h12.170l-5.58 5.59L12 20l8-8z"/></g>
</svg>
<div class="dot" style="left:662.5px"></div>
<div class="dot" style="left:764.5px"></div>
<div class="dot" style="left:913.5px"></div>
<div class="dot" style="left:1055.5px"></div>
<div class="dot" style="left:1129.5px"></div>

<!-- text layer -->
<span class="t" id="t0" style="left:41.40px;top:15.00px;font-size:14.2px;line-height:17px;color:#c6c8cb;-webkit-text-stroke:0.15px;transform:scaleX(0.95);">(45)</span>
<span class="t" id="t1" style="left:114.70px;top:15.00px;font-size:14.2px;line-height:17px;color:#c6c8cb;-webkit-text-stroke:0.15px;transform:scaleX(0.95);">Inst</span>
<span class="t" id="t2" style="left:188.10px;top:15.00px;font-size:14.2px;line-height:17px;color:#c6c8cb;-webkit-text-stroke:0.15px;transform:scaleX(0.95);">You</span>
<span class="t" id="t3" style="left:261.40px;top:15.00px;font-size:14.2px;line-height:17px;color:#c6c8cb;-webkit-text-stroke:0.15px;transform:scaleX(0.95);">nim</span>
<span class="t" id="t4" style="left:334.70px;top:15.00px;font-size:14.2px;line-height:17px;color:#c6c8cb;-webkit-text-stroke:0.15px;transform:scaleX(0.95);">Buil</span>
<span class="t" id="t5" style="left:408.00px;top:15.00px;font-size:14.2px;line-height:17px;color:#c6c8cb;-webkit-text-stroke:0.15px;transform:scaleX(0.95);">Goo</span>
<span class="t" id="t6" style="left:481.40px;top:15.00px;font-size:14.2px;line-height:17px;color:#c6c8cb;-webkit-text-stroke:0.15px;transform:scaleX(0.95);">dou</span>
<span class="t" id="t7" style="left:554.70px;top:15.00px;font-size:14.2px;line-height:17px;color:#c6c8cb;-webkit-text-stroke:0.15px;transform:scaleX(0.95);">mic</span>
<span class="t" id="t8" style="left:628.00px;top:15.00px;font-size:14.2px;line-height:17px;color:#c6c8cb;-webkit-text-stroke:0.15px;transform:scaleX(0.95);">dou</span>
<span class="t" id="t9" style="left:701.40px;top:15.00px;font-size:14.2px;line-height:17px;color:#c6c8cb;-webkit-text-stroke:0.15px;transform:scaleX(0.95);">@re</span>
<span class="t" id="t10" style="left:774.70px;top:15.00px;font-size:14.2px;line-height:17px;color:#c6c8cb;-webkit-text-stroke:0.15px;transform:scaleX(0.95);">Cha</span>
<span class="t" id="t11" style="left:848.00px;top:15.00px;font-size:14.2px;line-height:17px;color:#c6c8cb;-webkit-text-stroke:0.15px;transform:scaleX(0.95);">ios -</span>
<span class="t" id="t12" style="left:921.40px;top:15.00px;font-size:14.2px;line-height:17px;color:#c6c8cb;-webkit-text-stroke:0.15px;transform:scaleX(0.95);">Goo</span>
<span class="t" id="t13" style="left:994.70px;top:15.00px;font-size:14.2px;line-height:17px;color:#c6c8cb;-webkit-text-stroke:0.15px;transform:scaleX(0.95);">Goo</span>
<span class="t" id="t14" style="left:1068.00px;top:15.00px;font-size:14.2px;line-height:17px;color:#c6c8cb;-webkit-text-stroke:0.15px;transform:scaleX(0.95);">Hon</span>
<span class="t" id="t15" style="left:1141.40px;top:15.00px;font-size:14.2px;line-height:17px;color:#c6c8cb;-webkit-text-stroke:0.15px;transform:scaleX(0.95);">sanl</span>
<span class="t" id="t16" style="left:1214.70px;top:15.00px;font-size:14.2px;line-height:17px;color:#c6c8cb;-webkit-text-stroke:0.15px;transform:scaleX(0.95);">Goo</span>
<span class="t" id="t17" style="left:1288.00px;top:15.00px;font-size:14.2px;line-height:17px;color:#c6c8cb;-webkit-text-stroke:0.15px;transform:scaleX(0.95);">Hov</span>
<span class="t" id="t18" style="left:1433.70px;top:15.00px;font-size:14.2px;line-height:17px;color:#c6c8cb;-webkit-text-stroke:0.15px;transform:scaleX(0.95);">App</span>
<span class="t" id="t19" style="left:207.36px;top:58.00px;font-size:15.5px;line-height:19px;color:#5f6368;transform:scaleX(1.0883);"><span style="color:#84888d">https://</span><span style="color:#fff">play.google.com</span><span style="color:#84888d">/console/u/3/developers/7077303088077237667/app/4974949281528641246/publishing</span></span>
<span class="t" id="t20" style="left:1428.70px;top:55.00px;font-size:9.5px;line-height:11px;color:#fff;font-weight:700;">1</span>
<span class="t" id="t21" style="left:184.29px;top:99.00px;font-size:13.2px;line-height:16px;color:#e8eaed;transform:scaleX(1.1071);-webkit-text-stroke:0.2px;">godrej</span>
<span class="t" id="t22" style="left:269.85px;top:99.00px;font-size:13.2px;line-height:16px;color:#e8eaed;transform:scaleX(1.0318);-webkit-text-stroke:0.2px;">API and Exception...</span>
<span class="t" id="t23" style="left:473.53px;top:99.00px;font-size:13.2px;line-height:16px;color:#e8eaed;transform:scaleX(1.0641);-webkit-text-stroke:0.2px;">safety</span>
<span class="t" id="t24" style="left:557.02px;top:99.00px;font-size:13.2px;line-height:16px;color:#e8eaed;transform:scaleX(1.0383);-webkit-text-stroke:0.2px;">birla</span>
<span class="t" id="t25" style="left:1495.85px;top:99.00px;font-size:13.2px;line-height:16px;color:#e8eaed;transform:scaleX(1.0385);-webkit-text-stroke:0.2px;">All Bookmarks</span>
<span class="t" id="t26" style="left:109.25px;top:150.00px;font-size:20px;line-height:24px;color:#5f6368;transform:scaleX(0.9281);-webkit-text-stroke:0.15px;">Google Play</span>
<span class="t" id="t27" style="left:216.31px;top:150.00px;font-size:20px;line-height:24px;color:#4285f4;transform:scaleX(0.9600);-webkit-text-stroke:0.15px;">Console</span>
<span class="t" id="t28" style="left:78.02px;top:213.00px;font-size:14.4px;line-height:17px;color:#5f6368;transform:scaleX(1.1179);-webkit-text-stroke:0.55px;">All apps</span>
<span class="t" id="t29" style="left:75.72px;top:284.00px;font-size:14.4px;line-height:17px;color:#5f6368;transform:scaleX(1.1506);-webkit-text-stroke:0.6px;">Dashboard</span>
<span class="t" id="t30" style="left:75.58px;top:329.00px;font-size:14.4px;line-height:17px;color:#5f6368;transform:scaleX(1.1719);-webkit-text-stroke:0.6px;">Inbox</span>
<span class="t" id="t31" style="left:76.32px;top:373.00px;font-size:14.4px;line-height:17px;color:#5f6368;transform:scaleX(1.1983);-webkit-text-stroke:0.6px;">Statistics</span>
<span class="t" id="t32" style="left:75.69px;top:418.00px;font-size:14.4px;line-height:17px;color:#1967d2;transform:scaleX(1.1712);-webkit-text-stroke:0.6px;">Publishing overview</span>
<span class="t" id="t33" style="left:75.73px;top:543.00px;font-size:14.4px;line-height:17px;color:#5f6368;transform:scaleX(1.1419);-webkit-text-stroke:0.6px;">Releases overview</span>
<span class="t" id="t34" style="left:75.65px;top:588.00px;font-size:14.4px;line-height:17px;color:#5f6368;transform:scaleX(1.2080);-webkit-text-stroke:0.6px;">Production</span>
<span class="t" id="t35" style="left:76.74px;top:632.00px;font-size:14.4px;line-height:17px;color:#5f6368;transform:scaleX(1.1851);-webkit-text-stroke:0.6px;">Testing</span>
<span class="t" id="t36" style="left:75.73px;top:677.00px;font-size:14.4px;line-height:17px;color:#5f6368;transform:scaleX(1.1397);-webkit-text-stroke:0.6px;">Reach and devices</span>
<span class="t" id="t37" style="left:76.27px;top:721.00px;font-size:14.4px;line-height:17px;color:#5f6368;transform:scaleX(1.1901);-webkit-text-stroke:0.6px;">Overview</span>
<span class="t" id="t38" style="left:75.69px;top:766.00px;font-size:14.4px;line-height:17px;color:#5f6368;transform:scaleX(1.1756);-webkit-text-stroke:0.6px;">Device catalogue</span>
<span class="t" id="t39" style="left:77.04px;top:810.00px;font-size:14.4px;line-height:17px;color:#5f6368;transform:scaleX(1.1640);-webkit-text-stroke:0.6px;">App bundle explorer</span>
<span class="t" id="t40" style="left:77.04px;top:855.00px;font-size:14.4px;line-height:17px;color:#5f6368;transform:scaleX(1.2089);-webkit-text-stroke:0.6px;">App integrity</span>
<span class="t" id="t41" style="left:76.36px;top:899.00px;font-size:14.4px;line-height:17px;color:#5f6368;transform:scaleX(1.1451);-webkit-text-stroke:0.6px;">Setup</span>
<span class="t" id="t42" style="left:77.04px;top:944.00px;font-size:14.4px;line-height:17px;color:#5f6368;transform:scaleX(1.1661);-webkit-text-stroke:0.6px;">App signing</span>
<span class="t" id="t43" style="left:75.58px;top:988.00px;font-size:14.4px;line-height:17px;color:#5f6368;transform:scaleX(1.1725);-webkit-text-stroke:0.6px;">Internal app sharing</span>
<span class="t" id="t44" style="left:266.51px;top:329.00px;font-size:15.2px;line-height:18px;color:#5f6368;transform:scaleX(1.0696);-webkit-text-stroke:0.3px;">3</span>
<span class="t" id="t45" style="left:30.76px;top:491.00px;font-size:14.4px;line-height:17px;color:#202124;transform:scaleX(1.0927);-webkit-text-stroke:0.55px;">Release</span>
<span class="t" id="t46" style="left:424.09px;top:152.00px;font-size:17px;line-height:20px;color:#686c71;transform:scaleX(1.0492);-webkit-text-stroke:0.25px;">Search Play Console</span>
<span class="t" id="t47" style="left:1357.13px;top:148.00px;font-size:15.9px;line-height:19px;color:#3c4043;transform:scaleX(0.9883);-webkit-text-stroke:0.25px;">Godrej Partner Connect</span>
<span class="t" id="t48" style="left:354.87px;top:214.00px;font-size:36.3px;line-height:44px;color:#202124;transform:scaleX(1.0282);-webkit-text-stroke:1.0px;">Publishing overview</span>
<span class="t" id="t49" style="left:356.15px;top:271.00px;font-size:15.9px;line-height:19px;color:#5f6368;transform:scaleX(1.0007);-webkit-text-stroke:0.2px;">See an overview of the changes made to your app and control when changes are sent for review or published.</span>
<span class="t" id="t50" style="left:1140.16px;top:271.00px;font-size:15.9px;line-height:19px;color:#1b68d3;transform:scaleX(0.9885);-webkit-text-stroke:0.2px;text-decoration:underline;">Show more</span>
<span class="t" id="t51" style="left:355.62px;top:338.00px;font-size:14.4px;line-height:17px;color:#202124;transform:scaleX(1.1737);-webkit-text-stroke:0.45px;">Managed publishing</span>
<span class="t" id="t52" style="left:1366.63px;top:338.00px;font-size:14.4px;line-height:17px;color:#2a70da;transform:scaleX(1.1393);-webkit-text-stroke:0.35px;">Turn on managed publishing</span>
<span class="t" id="t53" style="left:384.26px;top:374.00px;font-size:15.9px;line-height:19px;color:#5f6368;transform:scaleX(1.0279);-webkit-text-stroke:0.2px;">Managed publishing off</span>
<span class="t" id="t54" style="left:356.25px;top:412.00px;font-size:15.9px;line-height:19px;color:#5f6368;transform:scaleX(0.9994);-webkit-text-stroke:0.2px;">When you send your changes to Google for review, they'll be published automatically as soon as they're approved</span>
<span class="t" id="t55" style="left:356.31px;top:488.00px;font-size:26.5px;line-height:32px;color:#202124;transform:scaleX(1.0286);-webkit-text-stroke:0.8px;">Changes in review</span>
<span class="t" id="t56" style="left:1357.63px;top:501.00px;font-size:14.4px;line-height:17px;color:#2a70da;transform:scaleX(1.1230);-webkit-text-stroke:0.35px;">Remove changes</span>
<span class="t" id="t57" style="left:1496.58px;top:501.00px;font-size:14.4px;line-height:17px;color:#5f6368;transform:scaleX(1.1822);-webkit-text-stroke:0.4px;">Hide</span>
<span class="t" id="t58" style="left:363.98px;top:565.00px;font-size:13.8px;line-height:17px;color:#5f6368;transform:scaleX(1.0124);-webkit-text-stroke:0.5px;">Item changed</span>
<span class="t" id="t59" style="left:660.06px;top:565.00px;font-size:13.8px;line-height:17px;color:#5f6368;transform:scaleX(1.0375);-webkit-text-stroke:0.5px;">Description</span>
<span class="t" id="t60" style="left:400.08px;top:612.00px;font-size:15.9px;line-height:19px;color:#3c4043;transform:scaleX(1.0357);-webkit-text-stroke:0.65px;">Production</span>
<span class="t" id="t61" style="left:364.49px;top:666.00px;font-size:15.9px;line-height:19px;color:#3c4043;transform:scaleX(1.0117);-webkit-text-stroke:0.25px;">62 (5.9.6)</span>
<span class="t" id="t62" style="left:660.22px;top:666.00px;font-size:15.9px;line-height:19px;color:#3c4043;transform:scaleX(1.0424);-webkit-text-stroke:0.25px;">Start full rollout</span>
<span class="t" id="t63" style="left:547.65px;top:935.00px;font-size:15.9px;line-height:19px;color:#5f6368;transform:scaleX(0.9981);-webkit-text-stroke:0.2px;">© 2024 Google</span>
<span class="t" id="t64" style="left:675.56px;top:935.00px;font-size:15.9px;line-height:19px;color:#5f6368;transform:scaleX(1.0288);-webkit-text-stroke:0.2px;text-decoration:underline;">Mobile app</span>
<span class="t" id="t65" style="left:777.15px;top:935.00px;font-size:15.9px;line-height:19px;color:#5f6368;transform:scaleX(1.0046);-webkit-text-stroke:0.2px;text-decoration:underline;">Status Dashboard</span>
<span class="t" id="t66" style="left:927.55px;top:935.00px;font-size:15.9px;line-height:19px;color:#5f6368;transform:scaleX(1.0061);-webkit-text-stroke:0.2px;text-decoration:underline;">Terms of Service</span>
<span class="t" id="t67" style="left:1067.59px;top:935.00px;font-size:15.9px;line-height:19px;color:#5f6368;transform:scaleX(1.0043);-webkit-text-stroke:0.2px;text-decoration:underline;">Privacy</span>
<span class="t" id="t68" style="left:1142.59px;top:935.00px;font-size:15.9px;line-height:19px;color:#5f6368;transform:scaleX(1.0078);-webkit-text-stroke:0.2px;text-decoration:underline;">Developer Distribution Agreement</span>
</div>
</body>
</html>
